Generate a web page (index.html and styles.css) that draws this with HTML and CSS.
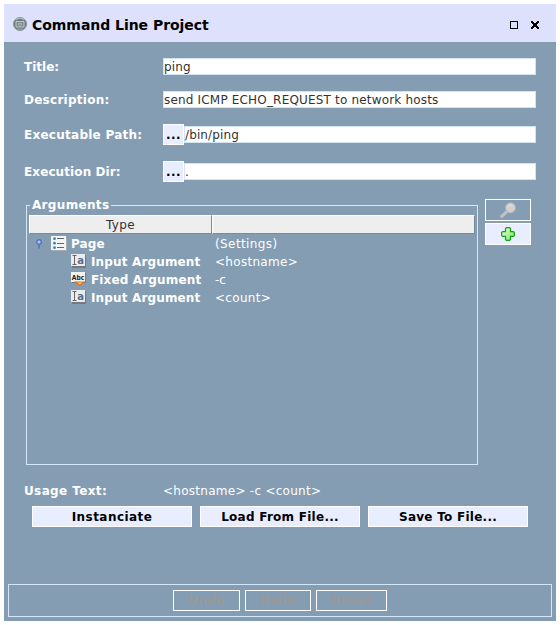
FILE: index.html
```
<!DOCTYPE html>
<html lang="en">
<head>
<meta charset="utf-8">
<title>Command Line Project</title>
<link rel="stylesheet" href="styles.css">
</head>
<body>
<main class="window">
  <header class="titlebar">
    <svg class="app-icon" width="14" height="14" viewBox="0 0 14 14"><circle cx="7" cy="7" r="6.5" fill="#68767b" stroke="#89979b"/><path d="M2.5 3Q7-.5 11.5 3" fill="none" stroke="#a9b5b8" stroke-width="1.5"/><path d="M3 4.5h8v5.5H3z" fill="#7b898e" stroke="#c1cccd"/><path d="M5.5 6.5h3v1.5h-3z" fill="#65747a" stroke="#b9c4c5" stroke-width=".8"/><path d="M4 12h6" stroke="#a2afb0"/></svg>
    <h1 class="title">Command Line Project</h1>
    <svg class="controls" width="30" height="8" viewBox="0 0 30 8" shape-rendering="crispEdges"><path d="M.5.5h7v7h-7z" fill="none" stroke="#000"/><path d="M21 0h2v1h1v1h2V1h1V0h2v2h-1v1h-1v2h1v1h1v2h-2V7h-1V6h-2v1h-1v1h-2V6h1V5h1V3h-1V2h-1z"/></svg>
  </header>
  <section class="form">
    <div class="row row-title"><span class="label l-title">Title:</span><div class="field"><span class="v-ping">ping</span></div></div>
    <div class="row row-desc"><span class="label l-desc">Description:</span><div class="field"><span class="v-desc">send ICMP ECHO_REQUEST to network hosts</span></div></div>
    <div class="row row-path"><span class="label l-path">Executable Path:</span><button class="browse">...</button><div class="field inset"><span class="v-ping">/bin/ping</span></div></div>
    <div class="row row-dir"><span class="label l-dir">Execution Dir:</span><button class="browse">...</button><div class="field inset"><span>.</span></div></div>
  </section>
  <section class="middle">
    <fieldset class="arguments">
      <legend>Arguments</legend>
      <div class="thead"><div class="th">Type</div><div class="th"></div></div>
      <div class="tr page">
        <svg class="handle" width="6" height="10" viewBox="0 0 6 10"><path d="M3 5v4.5" stroke="#5575bd" stroke-width="1.6"/><circle cx="3" cy="3" r="2.2" fill="#dce7ff" stroke="#526fc1" stroke-width="1.4"/><circle cx="3" cy="3" r=".6" fill="#273b6c"/></svg>
        <svg class="icon-page" width="16" height="15" viewBox="0 0 16 15"><path fill="#a5adb1" d="M1 1h15v14H1z"/><path fill="#f3f5f5" d="M0 0h15v14H0z"/><path d="M6 2.5h7M6 7.5h7M6 11.5h7" stroke="#5d676d"/><g fill="#3187ba"><circle cx="3.5" cy="2.7" r="1.4"/><circle cx="3.5" cy="7.2" r="1.4"/><circle cx="3.5" cy="11.7" r="1.4"/></g></svg>
        <span class="name n-page">Page</span><span class="value v-set">(Settings)</span>
      </div>
      <div class="tr child">
        <svg class="icon" width="16" height="14" viewBox="0 0 16 14"><path fill="#777a7d" d="M1 1h14v13H1z"/><path fill="#ececea" d="M0 0h14v12H0z"/><path d="M1.5 1.5h4M3.5 2v8M1.5 10.5h4" stroke="#666" fill="none"/><text class="glyph-a" x="6.2" y="9.5">a</text></svg>
        <span class="name n-arg">Input Argument</span><span class="value v-host">&lt;hostname&gt;</span>
      </div>
      <div class="tr child">
        <svg class="icon" width="16" height="14" viewBox="0 0 16 14"><path fill="#777a7d" d="M1 1h14v10H1z"/><path fill="#f4f3f0" d="M0 0h14v10H0z"/><text class="glyph-abc" x=".8" y="7.5" textLength="12.5" lengthAdjust="spacingAndGlyphs">Abc</text><path d="M4.8 10h8l-4 3.5z" fill="#ffd2a0" stroke="#dc741c" stroke-width="1.2"/></svg>
        <span class="name n-arg">Fixed Argument</span><span class="value v-c">-c</span>
      </div>
      <div class="tr child">
        <svg class="icon" width="16" height="14" viewBox="0 0 16 14"><path fill="#777a7d" d="M1 1h14v13H1z"/><path fill="#ececea" d="M0 0h14v12H0z"/><path d="M1.5 1.5h4M3.5 2v8M1.5 10.5h4" stroke="#666" fill="none"/><text class="glyph-a" x="6.2" y="9.5">a</text></svg>
        <span class="name n-arg">Input Argument</span><span class="value v-count">&lt;count&gt;</span>
      </div>
    </fieldset>
    <div class="side">
      <button class="tool disabled"><svg width="17" height="16" viewBox="0 0 17 16"><path d="M2 14.2 7.5 9" stroke="#c1c1c1" stroke-width="3" stroke-linecap="square"/><circle cx="10.5" cy="5.8" r="4.9" fill="#d0d0d0" stroke="#bababa"/><path d="M8 5Q10 2 13 4" stroke="#dcdcdc" fill="none" stroke-width="1.5"/></svg></button>
      <button class="tool"><svg width="14" height="14" viewBox="0 0 14 14"><defs><linearGradient id="green" x1="0" y1="0" x2="1" y2="1"><stop stop-color="#f0ffe5"/><stop offset="1" stop-color="#70e35b"/></linearGradient></defs><path d="M5.5.6h3l1 1v3h2.9l1 1v2.8l-1 1H9.5v3l-1 1h-3l-1-1v-3H1.6l-1-1V5.6l1-1h2.9v-3z" fill="url(#green)" stroke="#12a512" stroke-width="1.2"/></svg></button>
    </div>
  </section>
  <div class="usage"><span class="label l-usage">Usage Text:</span><span class="v-usage">&lt;hostname&gt; -c &lt;count&gt;</span></div>
  <div class="actions"><button><span class="b-inst">Instanciate</span></button><button><span class="b-load">Load From File...</span></button><button><span class="b-save">Save To File...</span></button></div>
  <footer class="footer"><button class="undo" disabled>Undo</button><button class="redo" disabled>Redo</button><button class="reset" disabled>Reset</button></footer>
</main>
</body>
</html>
```
FILE: styles.css
```
* { box-sizing: border-box; }
body { margin: 0; padding: 4px; background: #fff; font: 12px/14px "DejaVu Sans", sans-serif; color: #fff; }
.window { width: 552px; height: 617px; background: #849db3; display: flex; flex-direction: column; white-space: nowrap; }
.titlebar { height: 38px; flex: none; background: #dde1fc; display: flex; align-items: center; padding: 4px 16px 0 9px; color: #000; }
.app-icon { margin: -2px 5px 0 0; }
.title { margin: 0; font: bold 14px/18px "DejaVu Sans", sans-serif; letter-spacing: -.04px; }
.controls { margin-left: auto; }
.form { height: 153px; flex: none; padding: 14px 20px 0; }
.row { display: flex; align-items: center; height: 21px; }
.row-desc { margin-top: 12px; }
.row-path { margin-top: 14px; }
.row-dir { margin-top: 16px; }
.label { width: 139px; flex: none; font-weight: bold; }
.l-desc, .l-path { letter-spacing: .26px; }
.l-dir { letter-spacing: .1px; }
.l-usage { letter-spacing: .38px; }
.field { flex: 1; height: 17px; line-height: 17px; border: 1px solid #d2e3f2; background: #fff; color: #333; }
.v-ping { letter-spacing: .12px; }
.v-desc { letter-spacing: .18px; }
button { margin: 0; padding: 0; font: bold 12px/14px "DejaVu Sans", sans-serif; color: #000; background: #e8eeff; border: 1px solid #fff; border-radius: 0; }
.browse { width: 21px; height: 21px; letter-spacing: .5px; }
.middle { display: flex; gap: 7px; padding-left: 22px; height: 274px; flex: none; }
.arguments { width: 452px; height: 267px; min-width: 0; margin: 3px 0 0; padding: 3px 2px 0; border: 1px solid #d2e8fa; }
.arguments legend { margin-left: 1px; padding: 0 2px; height: 14px; line-height: 15px; font-weight: bold; letter-spacing: .33px; }
.thead { display: flex; margin-bottom: 1px; }
.th { width: 183px; height: 19px; background: #eee; border: 1px solid; border-color: #fff #7a8a99 #7a8a99 #fff; color: #333; text-align: center; line-height: 18px; letter-spacing: .4px; }
.th + .th { width: 263px; }
.tr { height: 18px; display: flex; align-items: center; padding-left: 42px; }
.page { padding-left: 7px; }
.handle { margin-right: 9px; }
.icon, .icon-page { margin-right: 4px; position: relative; top: -1px; }
.name { width: 124px; flex: none; font-weight: bold; letter-spacing: .15px; }
.n-page { width: 144px; }
.v-host, .v-count { letter-spacing: .3px; }
.v-set { letter-spacing: .4px; }
.glyph-a { font: bold 10px "DejaVu Sans", sans-serif; fill: #536f96; }
.glyph-abc { font: bold 7px "DejaVu Sans", sans-serif; fill: #222; }
.side { padding-top: 4px; }
.tool { display: flex; align-items: center; justify-content: center; width: 46px; height: 22px; margin-bottom: 2px; }
.disabled { background: transparent; }
.usage { display: flex; padding: 15px 20px 0; height: 37px; flex: none; }
.v-usage { letter-spacing: .27px; }
.actions { display: flex; gap: 8px; padding-left: 28px; flex: none; }
.actions button { width: 160px; height: 21px; }
.b-inst { letter-spacing: .45px; }
.b-load, .b-save { letter-spacing: .26px; }
.footer { margin: auto 4px 4px; height: 33px; border: 1px solid #d2e8fa; display: flex; align-items: center; padding: 0 0 1px 164px; gap: 5px; }
.footer button { height: 21px; color: #999; background: transparent; letter-spacing: .4px; }
.undo { width: 67px; }
.redo { width: 66px; }
.reset { width: 71px; }
```
